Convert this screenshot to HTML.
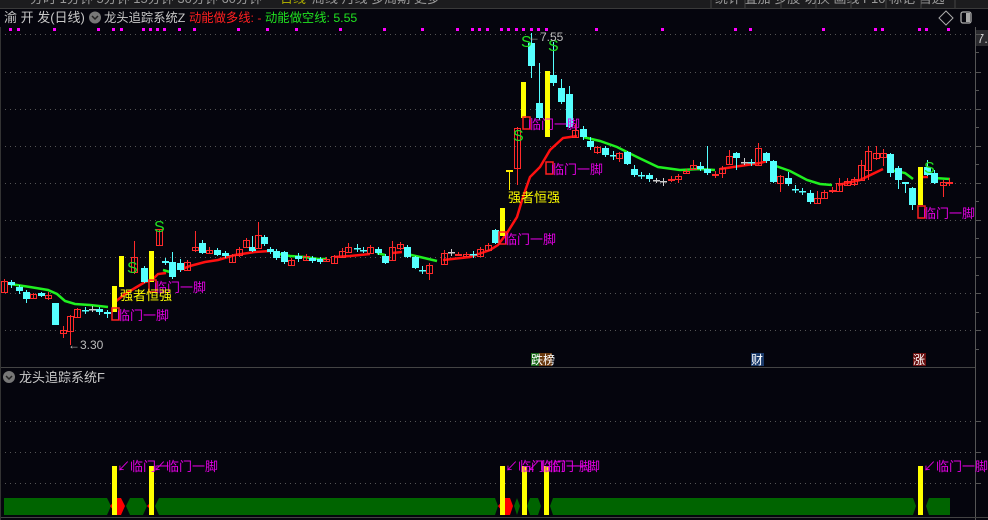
<!DOCTYPE html>
<html><head><meta charset="utf-8"><style>
html,body{margin:0;padding:0;background:#05050d;}
body{width:988px;height:520px;overflow:hidden;position:relative;font-family:"Liberation Sans","Noto Sans CJK SC",sans-serif;}
svg{position:absolute;left:0;top:0;}
</style></head><body>
<svg id="s" width="988" height="520" viewBox="0 0 988 520" xmlns="http://www.w3.org/2000/svg" font-family="Liberation Sans, Noto Sans CJK SC, sans-serif">
<rect width="988" height="520" fill="#05050d"/>
<!-- toolbar -->
<rect x="0" y="0" width="988" height="8" fill="#1c1c1e"/>
<line x1="0" y1="8.5" x2="988" y2="8.5" stroke="#3a3a3a"/>
<g font-size="13" fill="#999">
<text x="30" y="3">分时 1分钟 5分钟 15分钟 30分钟 60分钟</text>
<text x="280" y="3" fill="#a8a800">日线</text>
<text x="312" y="3">周线 月线 多周期 更多</text>
<text x="715" y="3">统计 叠加 多股 切换 画线 F10 标记 自选</text>
</g>
<g stroke="#444" stroke-width="1"><line x1="711" y1="0" x2="711" y2="8"/><line x1="745" y1="0" x2="745" y2="8"/><line x1="781" y1="0" x2="781" y2="8"/><line x1="816" y1="0" x2="816" y2="8"/><line x1="851" y1="0" x2="851" y2="8"/><line x1="886" y1="0" x2="886" y2="8"/><line x1="921" y1="0" x2="921" y2="8"/><line x1="955" y1="0" x2="955" y2="8"/></g>
<!-- title -->
<text x="4" y="22" font-size="13" fill="#c8c8c8">渝 开 发(日线)</text>
<circle cx="95" cy="17.5" r="6" fill="#777"/><path d="M92 16l3 3 3-3" stroke="#222" stroke-width="1.5" fill="none"/>
<text x="104" y="22" font-size="12.3" fill="#c8c8c8">龙头追踪系统Z</text>
<text x="189" y="22" font-size="12.3" fill="#ff2020">动能做多线: -</text>
<text x="265" y="22" font-size="12.3" fill="#20e020">动能做空线: 5.55</text>
<path d="M946 11l7 7-7 7-7-7z" fill="none" stroke="#aaa"/>
<rect x="961" y="12" width="10" height="11" rx="2" fill="none" stroke="#aaa" stroke-width="1.3"/><rect x="966" y="13" width="4" height="9" fill="#aaa"/>
<!-- axis -->
<line x1="975.5" y1="27" x2="975.5" y2="520" stroke="#555"/>
<rect x="976" y="30" width="12" height="16" fill="#2a2a2e"/><text x="977" y="43" font-size="13" fill="#ccc">7.5</text>
<g id="grid"></g>
<line x1="0" y1="367.5" x2="975" y2="367.5" stroke="#444"/>
<line x1="0" y1="517.5" x2="988" y2="517.5" stroke="#444"/>
<line x1="0.5" y1="27" x2="0.5" y2="520" stroke="#333"/>
<g id="dots" fill="#ff00ff"></g>
<g id="ma" fill="none" stroke-width="2.5"></g>
<g id="c"></g>
<g id="lab"></g>
<!-- price marks -->
<text x="68" y="349" font-size="12" fill="#bbb">←3.30</text>
<text x="528" y="41" font-size="12" fill="#bbb">←7.55</text>
<!-- event markers -->
<rect x="531" y="353" width="8" height="13" fill="#1a6a1a"/><rect x="539" y="353" width="13" height="13" fill="#6a3a10"/>
<text x="531" y="364" font-size="12" fill="#fff">跌榜</text>
<rect x="751" y="353" width="13" height="13" fill="#1a3a6a"/><text x="751" y="364" font-size="12" fill="#fff">财</text>
<rect x="913" y="353" width="13" height="13" fill="#6a1010"/><text x="913" y="364" font-size="12" fill="#fff">涨</text>
<!-- bottom panel -->
<circle cx="9" cy="377" r="6" fill="#777"/><path d="M6 376l3 3 3-3" stroke="#222" stroke-width="1.5" fill="none"/>
<text x="19" y="382" font-size="13" fill="#c8c8c8">龙头追踪系统F</text>
<g id="bot"></g>
</svg>
<script>
var NS="http://www.w3.org/2000/svg";
function el(p,t,a,txt){var e=document.createElementNS(NS,t);for(var k in a)e.setAttribute(k,a[k]);if(txt)e.textContent=txt;document.getElementById(p).appendChild(e);return e;}
[34,72,109,146,183,220,257,293,330,421,452,483].forEach(function(y){el('grid','line',{x1:0,y1:y+.5,x2:975,y2:y+.5,stroke:'#555','stroke-dasharray':'1 4'});
el('grid','line',{x1:975,y1:y+.5,x2:981,y2:y+.5,stroke:'#555'});});
[52,90,127,164,201,238,275,312,349].forEach(function(y){el('grid','line',{x1:975,y1:y+.5,x2:979,y2:y+.5,stroke:'#555'});});
[10,18,54,98,113,121,143,150,157,164,179,194,238,267,296,340,384,422,457,472,479,487,501,508,516,523,531,538,546,596,662,735,750,823,875,882,919,926,948].forEach(function(x){el('dots','rect',{x:x-1,y:28,width:3,height:3});});
var C=[[4,281,292,279,293,'r'],[11,282,285,280,288,'c'],[19,287,291,285,294,'c'],[26,292,299,290,303,'c'],[33,294,298,293,299,'r'],[41,293,296,292,297,'c'],[48,295,298,292,300,'r'],[55,303,325,303,325,'c'],[63,330,333,326,338,'r'],[70,316,331,315,345,'r'],[77,309,317,308,318,'r'],[85,310,311,307,314,'c'],[92,309,310,306,312,'g'],[99,309,312,307,315,'c'],[107,312,314,310,318,'c'],
[134,257,272,241,274,'r'],[144,268,282,266,283,'c'],[159,229,245,229,246,'r'],[165,261,263,258,265,'c'],[172,262,277,252,279,'c'],[180,263,270,259,272,'c'],[187,262,270,260,271,'r'],[195,247,250,231,252,'r'],[202,243,253,240,254,'c'],[209,250,253,247,254,'r'],[217,250,255,248,256,'c'],[225,253,256,251,258,'c'],[232,255,262,254,263,'r'],[239,249,255,247,257,'r'],[246,240,247,238,248,'r'],[252,247,251,236,252,'c'],[258,235,248,222,249,'r'],[264,237,244,235,246,'c'],[270,249,252,247,254,'c'],[276,251,258,249,260,'c'],[284,252,262,251,264,'c'],[291,260,265,258,266,'r'],[298,256,259,253,262,'c'],[306,256,260,254,261,'r'],[312,258,261,256,263,'c'],[320,259,262,257,264,'c'],[326,259,261,257,262,'r'],
[334,256,263,255,264,'r'],[342,251,257,248,258,'r'],[348,247,252,243,253,'r'],[357,248,249,244,252,'c'],[363,250,251,247,253,'c'],[370,247,253,245,254,'r'],[378,249,253,247,255,'c'],[385,256,263,254,264,'c'],[392,247,260,241,261,'r'],[400,244,248,242,250,'r'],[407,247,257,245,258,'c'],[415,257,268,256,269,'c'],[422,270,271,266,274,'c'],[429,265,273,263,280,'r'],[444,253,264,250,265,'r'],[451,252,253,249,256,'g'],[458,254,255,252,256,'r'],[466,254,256,252,257,'r'],[473,254,255,251,258,'c'],[480,249,256,247,257,'r'],[488,245,250,243,251,'r'],[495,230,243,229,244,'c'],
[509,170,172,170,190,'y'],[517,128,168,127,185,'r'],[531,43,66,33,78,'c'],[539,103,118,63,120,'c'],[553,75,83,42,86,'c'],[561,88,102,79,104,'c'],[569,94,127,86,128,'c'],[575,130,137,124,138,'r'],[583,129,137,126,140,'c'],[590,141,147,137,150,'c'],[597,147,152,146,154,'r'],[605,148,155,146,157,'c'],[613,155,156,151,160,'c'],[619,153,158,152,162,'r'],[627,152,164,151,165,'c'],[634,169,175,165,177,'c'],[641,175,176,172,179,'c'],[649,175,179,173,182,'c'],[656,180,181,178,183,'g'],
[663,181,182,178,186,'g'],[671,179,180,176,182,'r'],[678,176,179,174,183,'r'],[686,171,173,169,174,'r'],[693,165,169,160,170,'r'],[700,166,169,162,171,'c'],[707,169,173,146,175,'c'],[715,174,175,171,178,'r'],[722,168,173,166,178,'r'],[729,156,164,150,165,'r'],[736,153,158,152,170,'c'],[744,162,163,158,165,'g'],[751,162,163,159,166,'c'],[758,148,165,143,166,'r'],[766,153,161,152,163,'c'],[773,161,182,160,183,'c'],[780,176,183,175,192,'r'],[788,178,184,172,186,'c'],[795,189,190,185,193,'c'],[802,191,192,188,195,'c'],[810,193,202,190,204,'c'],[817,198,203,191,204,'r'],[824,192,198,190,199,'r'],[832,190,191,187,193,'r'],[839,183,191,178,192,'r'],[847,181,185,178,186,'r'],[854,179,184,177,186,'r'],[861,165,180,160,181,'r'],[868,151,170,146,180,'r'],[876,153,158,146,160,'r'],[883,153,157,149,166,'r'],[890,154,173,153,177,'c'],[898,168,180,166,189,'c'],[905,182,184,182,193,'c'],[912,188,205,187,210,'c'],[927,167,175,160,176,'c'],[934,173,183,170,184,'c'],[943,182,185,180,197,'r'],[949,182,183,178,186,'r']];
var col={r:'#ff2a2a',c:'#55ffff',g:'#cccccc',y:'#ffee00'};
C.forEach(function(d){var x=d[0],k=col[d[5]];
el('c','line',{x1:x+.5,y1:d[3],x2:x+.5,y2:d[4],stroke:k});
if(d[5]=='r')el('c','rect',{x:x-2.5,y:d[1]+.5,width:6,height:Math.max(d[2]-d[1],1),fill:'none',stroke:k});
else el('c','rect',{x:x-3,y:d[1],width:7,height:Math.max(d[2]-d[1],1.5),fill:k});});
[[112,286,312],[119,256,287],[149,251,282],[500,208,236],[521,82,118],[545,71,137],[918,167,205]].forEach(function(b){el('c','rect',{x:b[0],y:b[1],width:5,height:b[2]-b[1],fill:'#ffff00'});});
var segs=[['g',[[10,284],[30,287],[48,290],[57,294],[65,301],[75,304],[90,305],[108,307]]],
['r',[[115,302],[125,294],[135,288],[145,282],[152,280],[158,274],[166,273]]],
['r',[[180,270],[190,266],[205,262],[218,260],[235,255],[255,252],[270,251]]],
['g',[[273,253],[290,256],[305,257],[318,259],[327,259]]],
['g',[[163,270],[170,272]]],
['r',[[334,257],[350,256],[370,254]]],['g',[[377,253],[385,255]]],['r',[[392,253],[402,252]]],
['g',[[407,254],[420,257],[437,261]]],
['r',[[443,260],[470,257],[490,250],[498,245],[507,233],[517,217],[523,197],[530,177],[540,167],[550,150],[563,138],[577,136]]],
['g',[[583,137],[600,141],[617,147],[637,157],[658,167],[680,170],[700,169],[715,170]]],
['r',[[720,169],[740,166],[760,163],[767,161]]],
['g',[[773,165],[790,171],[807,180],[820,184],[832,185]]],
['r',[[838,185],[860,180],[883,169]]],['g',[[890,170],[905,173],[913,179]]],['r',[[923,177],[928,177]]],['g',[[934,178],[950,179]]]];
segs.forEach(function(s){el('ma','polyline',{points:s[1].join(' '),stroke:s[0]=='r'?'#ff1010':'#20f020'});});
[[525,47],[552,51],[158,232],[131,273],[517,141],[928,173]].forEach(function(p){el('lab','text',{x:p[0]-4,y:p[1],'font-size':16,fill:'#20e020'},'S');});
[[113,318],[150,290],[500,242],[524,127],[547,172],[919,216]].forEach(function(p){
el('lab','rect',{x:p[0]-1,y:p[1]-10,width:7,height:12,fill:'none',stroke:'#ff2020','stroke-width':1.5});
el('lab','text',{x:p[0]+4,y:p[1]+2,'font-size':13,fill:'#e000e0'},'临门一脚');});
[[120,300],[508,202]].forEach(function(p){el('lab','text',{x:p[0],y:p[1],'font-size':13,fill:'#ffff00'},'强者恒强');});
el('bot','polygon',{points:'4,498 107,498 111,506 107,515 4,515',fill:'#006400'});
el('bot','polygon',{points:'110,506 117,498 121,498 125,506 121,515 117,515',fill:'#ff0000'});
el('bot','polygon',{points:'126,506 130,498 143,498 147,506 143,515 130,515',fill:'#006400'});
el('bot','polygon',{points:'147,506 150,503 150,509',fill:'#ff0000'});
el('bot','polygon',{points:'155,506 159,498 495,498 498,506 495,515 159,515',fill:'#006400'});
el('bot','polygon',{points:'498,506 505,498 510,498 513,506 510,515 505,515',fill:'#ff0000'});
el('bot','polygon',{points:'514,506 517,498 520,506 517,515',fill:'#006400'});
el('bot','polygon',{points:'527,506 530,498 538,498 541,506 538,515 530,515',fill:'#006400'});
el('bot','polygon',{points:'550,506 553,498 913,498 916,506 913,515 553,515',fill:'#006400'});
el('bot','polygon',{points:'926,506 929,498 950,498 950,515 929,515',fill:'#006400'});
[112,149,500,522,544,918].forEach(function(x){el('bot','rect',{x:x,y:466,width:5,height:49,fill:'#ffff00'});});
[[117,'↙临门一'],[153,'↙临门一脚'],[505,'↙临门'],[527,'↙临门一脚'],[548,'临门一脚'],[923,'↙临门一脚']].forEach(function(t){el('bot','text',{x:t[0],y:471,'font-size':13,fill:'#e000e0'},t[1]);});
</script>
</body></html>
